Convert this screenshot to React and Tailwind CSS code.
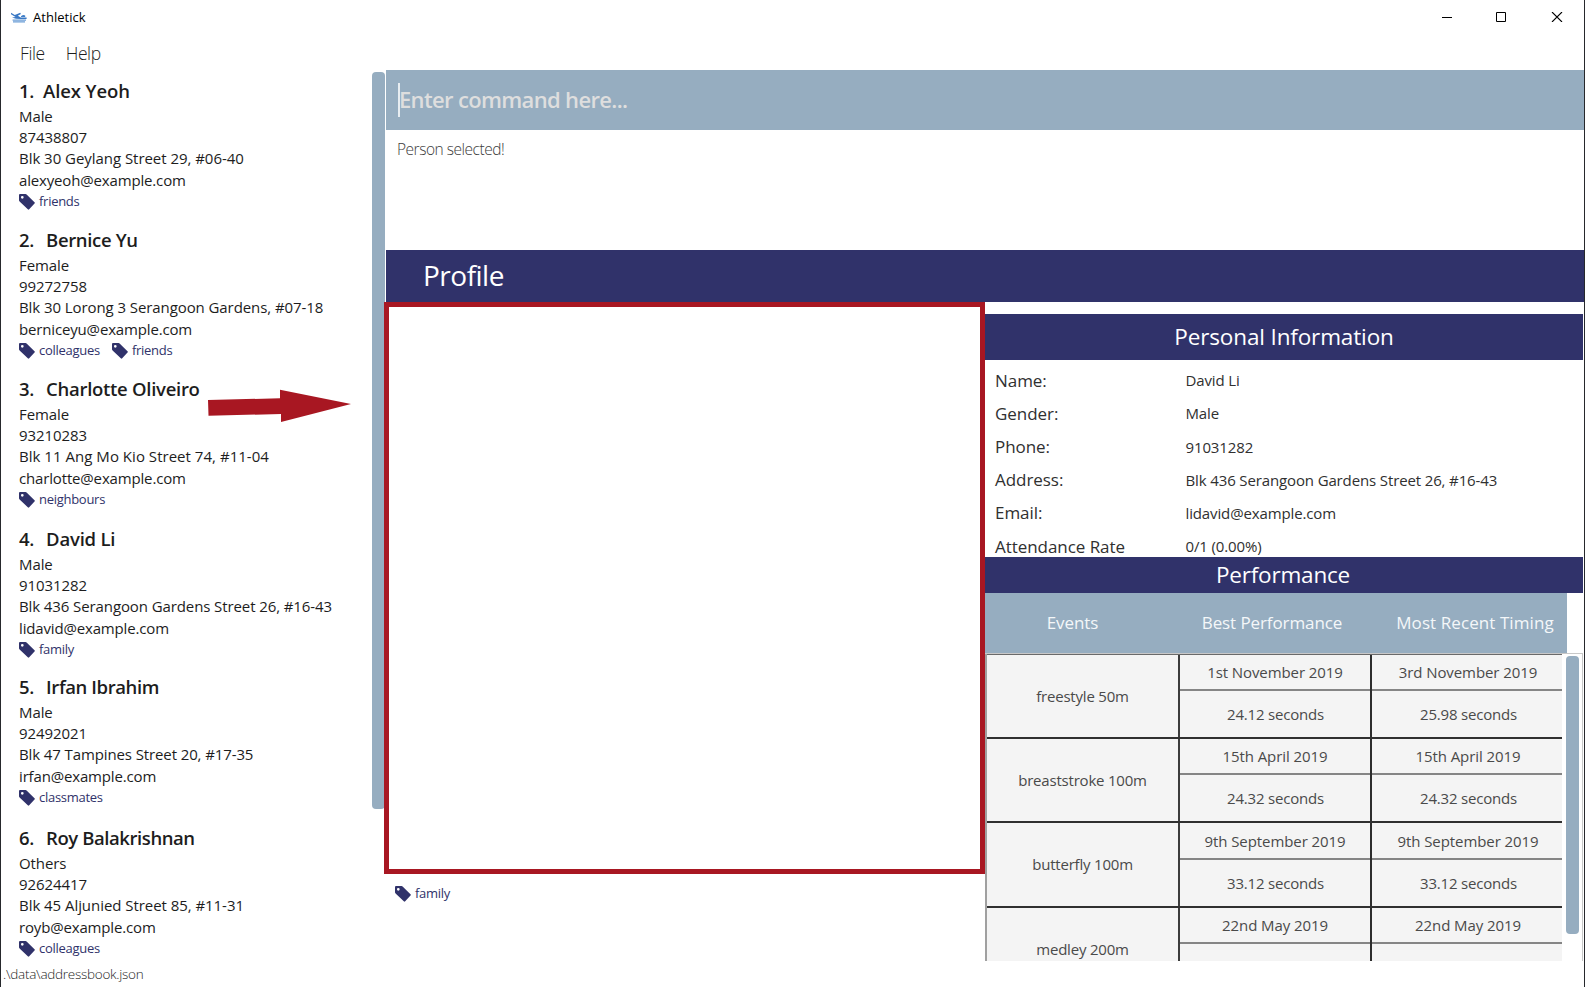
import React from "react";

const people = [
  { n: 1, name: "Alex Yeoh", gender: "Male", phone: "87438807", address: "Blk 30 Geylang Street 29, #06-40", email: "alexyeoh@example.com", tags: ["friends"], box: "h-[149px]", gap: "gap-[9px]", nameTrack: "tracking-[-0.1px]", addressTrack: "tracking-[-0.04px]" },
  { n: 2, name: "Bernice Yu", gender: "Female", phone: "99272758", address: "Blk 30 Lorong 3 Serangoon Gardens, #07-18", email: "berniceyu@example.com", tags: ["colleagues", "friends"], box: "h-[149px]", gap: "gap-[12px]", nameTrack: "tracking-[-0.35px]", addressTrack: "tracking-[-0.08px]" },
  { n: 3, name: "Charlotte Oliveiro", gender: "Female", phone: "93210283", address: "Blk 11 Ang Mo Kio Street 74, #11-04", email: "charlotte@example.com", tags: ["neighbours"], box: "h-[150px]", gap: "gap-[12px]", nameTrack: "tracking-[-0.28px]", addressTrack: "tracking-[0.03px]" },
  { n: 4, name: "David Li", gender: "Male", phone: "91031282", address: "Blk 436 Serangoon Gardens Street 26, #16-43", email: "lidavid@example.com", tags: ["family"], box: "h-[148px]", gap: "gap-[12px]", nameTrack: "tracking-[-0.2px]", addressTrack: "tracking-[-0.1px]" },
  { n: 5, name: "Irfan Ibrahim", gender: "Male", phone: "92492021", address: "Blk 47 Tampines Street 20, #17-35", email: "irfan@example.com", tags: ["classmates"], box: "h-[151px]", gap: "gap-[12px]", nameTrack: "tracking-[-0.4px]", addressTrack: "tracking-[-0.11px]" },
  { n: 6, name: "Roy Balakrishnan", gender: "Others", phone: "92624417", address: "Blk 45 Aljunied Street 85, #11-31", email: "royb@example.com", tags: ["colleagues"], box: "h-[140px]", gap: "gap-[12px]", nameTrack: "tracking-[-0.42px]", addressTrack: "tracking-[-0.05px]" },
];

const info = [
  ["Name:", "David Li"],
  ["Gender:", "Male"],
  ["Phone:", "91031282"],
  ["Address:", "Blk 436 Serangoon Gardens Street 26, #16-43"],
  ["Email:", "lidavid@example.com"],
  ["Attendance Rate", "0/1 (0.00%)"],
];

const events = [
  { name: "freestyle 50m", row: "h-[84px]", top: "h-[36px]", best: ["1st November 2019", "24.12 seconds"], recent: ["3rd November 2019", "25.98 seconds"] },
  { name: "breaststroke 100m", row: "h-[84px]", top: "h-[36px]", best: ["15th April 2019", "24.32 seconds"], recent: ["15th April 2019", "24.32 seconds"] },
  { name: "butterfly 100m", row: "h-[85px]", top: "h-[37px] pt-px", best: ["9th September 2019", "33.12 seconds"], recent: ["9th September 2019", "33.12 seconds"] },
  { name: "medley 200m", row: "h-[85px]", top: "h-[36px]", best: ["22nd May 2019", ""], recent: ["22nd May 2019", ""] },
];

function Tag({ children }) {
  return (
    <span className="flex h-4 items-center">
      <svg width="16" height="16" viewBox="0 0 16 16" className="mt-px shrink-0">
        <path
          fillRule="evenodd"
          fill="#30326a"
          d="M1 0H6.6L7.6 .5L15.5 8.2Q16.2 8.9 15.5 9.6L10.2 15.3Q9.5 16 8.8 15.3L.6 7.6L0 6.5V1Q0 0 1 0ZM3.3 2A1.35 1.35 0 1 0 3.3 4.7A1.35 1.35 0 1 0 3.3 2Z"
        />
      </svg>
      <span className="ml-[4px] text-[13px] leading-4 tracking-[-0.28px] text-[#30326a]">{children}</span>
    </span>
  );
}

function Person({ p }) {
  return (
    <div className={"flex shrink-0 flex-col pl-[18px] " + p.box}>
      <div className={"flex h-[27px] items-center text-[18.5px] font-semibold text-[#1d1d1d] " + p.gap}>
        <span className="tracking-[-0.3px]">{p.n}.</span>
        <span className={p.nameTrack}>{p.name}</span>
      </div>
      <div className="mt-[2px] text-[15px] leading-[21px] tracking-[-0.08px] text-[#1d1d1d]">
        <div>{p.gender}</div>
        <div>{p.phone}</div>
        <div className={p.addressTrack}>{p.address}</div>
        <div className="pt-px tracking-[-0.16px]">{p.email}</div>
      </div>
      <div className="mt-[2px] flex gap-[12px]">
        {p.tags.map((t) => (
          <Tag key={t}>{t}</Tag>
        ))}
      </div>
    </div>
  );
}

function Timing({ pair, top, last }) {
  return (
    <div className={"flex flex-col border-[#2d2d2d] " + (last ? "w-[190px]" : "w-[192px] border-r-2")}>
      <div className={"flex shrink-0 items-center justify-center border-b-2 border-[#858585] " + top + (last ? " pl-[2px]" : "")}>{pair[0]}</div>
      <div className={"flex h-[46px] items-center justify-center tracking-[-0.2px] " + (last ? "pl-[3px]" : "pl-px")}>{pair[1]}</div>
    </div>
  );
}

export default function App() {
  return (
    <div className="relative flex h-[987px] w-[1585px] flex-col overflow-hidden border-x border-[#26282c] bg-white font-['Open_Sans','Noto_Sans',sans-serif]">
      <header className="flex h-[34px] shrink-0 items-center pl-[10px]">
        <svg width="16" height="11" viewBox="0 0 16 11" className="mt-[1px]">
          <path d="M0 .8 3.8 3.1 9.2 .8 9.9 2 6.8 3.8 9.8 5.4 15.6 5.5V6.9H9.8L5 6.8 1 5.6 4.5 4.9 0 2.2Z" fill="#3a78c4" />
          <path d="M10 4.2Q12.5 2 14.2 3.6V5H10Z" fill="#3f7ec8" />
          <path d="M1.6 8.2H15M2 9.9H14" fill="none" stroke="#6b9dd6" strokeWidth="1.3" />
        </svg>
        <span className="ml-[6px] text-[13px] leading-4 tracking-[0.02px] text-black">Athletick</span>
        <div className="ml-auto flex items-center pr-[21px]">
          <svg width="121" height="10" viewBox="0 0 121 10">
            <path d="M0 5.5H10" stroke="#000" />
            <path d="M54.5 .5H63.5V9.5H54.5Z" fill="none" stroke="#000" />
            <path d="M110 0 120 10M120 0 110 10" stroke="#000" strokeWidth="1.1" />
          </svg>
        </div>
      </header>
      <nav className="flex h-[36px] shrink-0 items-center gap-[21px] pt-[2px] pl-[19px] text-[17.5px] font-light tracking-[-0.4px] text-[#1d1d1d]">
        <span>File</span>
        <span>Help</span>
      </nav>

      <div className="flex h-[891px] shrink-0">
        <aside className="flex w-[385px] shrink-0">
          <div className="flex w-[370.5px] flex-col pt-[7px]">
            {people.map((p) => (
              <Person key={p.n} p={p} />
            ))}
          </div>
          <div className="mt-[2px] h-[737px] w-[13.5px] rounded-[4px] bg-[#96adc0]" />
        </aside>

        <main className="flex min-w-0 flex-1 flex-col">
          <div className="flex h-[60px] shrink-0 items-center bg-[#96adc0] pl-[12px]">
            <div className="h-[34px] w-[2px] bg-[#e8edf1]" />
            <span className="-ml-px pb-[2px] text-[22px] font-semibold tracking-[-0.66px] text-[#dedede]">Enter command here...</span>
          </div>
          <div className="h-[120px] shrink-0 pt-[9px] pl-[11px] text-[15.5px] leading-[20px] font-light tracking-[-0.48px] text-[#3c3c3c]">Person selected!</div>
          <div className="flex h-[52px] shrink-0 items-center bg-[#30326a] pb-[2px] pl-[37px] text-[28px] tracking-[-0.5px] text-white">Profile</div>

          <div className="flex">
            <section className="flex w-[599px] shrink-0 flex-col">
              <div className="-ml-[2px] h-[572px] w-[601px] border-[5px] border-[#a81722]" />
              <div className="mt-[11px] ml-[9px]">
                <Tag>family</Tag>
              </div>
            </section>

            <section className="flex w-[598px] shrink-0 flex-col pt-[12px]">
              <div className="flex h-[46px] shrink-0 items-center justify-center bg-[#30326a] text-[22.5px] tracking-[-0.14px] text-white">Personal Information</div>
              <div className="flex h-[197px] shrink-0 flex-col pt-[4px] text-[#303030]">
                {info.map(([k, v]) => (
                  <div key={k} className="flex h-[33.15px] shrink-0 items-center pl-[10px]">
                    <span className="w-[190.5px] text-[17px] tracking-[-0.05px]">{k}</span>
                    <span className="text-[15px] tracking-[-0.13px]">{v}</span>
                  </div>
                ))}
              </div>
              <div className="flex h-[36px] shrink-0 items-center justify-center bg-[#30326a] pr-[2px] text-[22.5px] tracking-[-0.2px] text-white">Performance</div>
              <div className="flex h-[60px] w-[582px] shrink-0 items-center bg-[#96adc0] text-[17px] tracking-[-0.1px] text-[#f4f7f9]">
                <span className="w-[175px] text-center">Events</span>
                <span className="w-[224px] text-center">Best Performance</span>
                <span className="w-[182px] text-center tracking-[0.08px]">Most Recent Timing</span>
              </div>
              <div className="flex h-[308px] shrink-0 overflow-hidden border-t border-r border-[#c8c8c8]">
                <div className="flex w-[577px] shrink-0 flex-col border-l-2 border-[#a0a0a0] bg-[#f4f4f4]">
                  <div className="h-px shrink-0 bg-[#6a6a6a]" />
                  {events.map((e) => (
                    <div key={e.name} className={"flex shrink-0 border-b-2 border-[#303030] text-[15px] tracking-[-0.08px] text-[#4a4a4a] " + e.row}>
                      <div className="flex w-[193px] items-center justify-center border-r-2 border-[#3c3c3c] tracking-[-0.2px]">{e.name}</div>
                      <Timing pair={e.best} top={e.top} />
                      <Timing pair={e.recent} top={e.top} last />
                    </div>
                  ))}
                </div>
                <div className="mt-[2px] ml-[4px] h-[278px] w-[13px] rounded-[4px] bg-[#96adc0]" />
              </div>
            </section>
          </div>
        </main>
      </div>

      <footer className="flex h-[26px] shrink-0 items-center pl-[2px] text-[13.5px] font-light tracking-[-0.27px] text-[#1d1d1d]">.\data\addressbook.json</footer>

      <svg width="144" height="34" viewBox="0 0 144 34" className="absolute top-[389px] left-[207px]">
        <path d="M0 11 72 9.3V.8L143 15 73 33V25L.5 26.7Z" fill="#a81722" />
      </svg>
    </div>
  );
}
